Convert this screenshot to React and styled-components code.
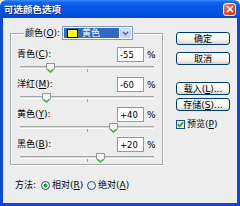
import React from 'react';
import styled, { createGlobalStyle } from 'styled-components';

const GlobalStyle = createGlobalStyle`
  html, body {
    margin: 0;
    padding: 0;
    background: #ffffff;
  }
  body {
    font-family: "DejaVu Sans", "Noto Sans CJK SC", sans-serif;
  }
`;

const FONT = `"DejaVu Sans", "Noto Sans CJK SC", sans-serif`;
const FACE = '#EDEDED';

const sliders = [
  { id: 'cyan', label: '青色', hotkey: 'C', value: -55 },
  { id: 'magenta', label: '洋红', hotkey: 'M', value: -60 },
  { id: 'yellow', label: '黄色', hotkey: 'Y', value: 40 },
  { id: 'black', label: '黑色', hotkey: 'B', value: 20 },
];

const TRACK = 134;

const formatValue = (v) => (v > 0 ? `+${v}` : `${v}`);

const Thumb = ({ left }) => (
  <ThumbWrap style={{ left }}>
    <svg width='9' height='10' viewBox='0 0 9 10'>
      <path
        d='M0.5 0.5 H8.5 V6 L4.5 9.5 L0.5 6 Z'
        fill='#F4F4F0'
        stroke='#8C97A5'
      />
      <path d='M1.5 6.3 L4.5 8.8 L7.5 6.3' fill='none' stroke='#3BB23B' strokeWidth='1.3' />
    </svg>
  </ThumbWrap>
);

const SliderRow = ({ label, hotkey, value }) => {
  const center = TRACK / 2 + (value / 100) * (TRACK / 2);
  return (
    <Row>
      <RowTop>
        <Label>
          {label}(<u>{hotkey}</u>):
        </Label>
        <Input>{formatValue(value)}</Input>
        <Percent>%</Percent>
      </RowTop>
      <TrackArea>
        <Channel />
        <Tick />
        <Thumb left={Math.round(center - 4.5)} />
      </TrackArea>
    </Row>
  );
};

const App = () => {
  return (
    <>
      <GlobalStyle />
      <Window>
        <TitleBar>
          <Title>可选颜色选项</Title>
          <CloseButton>
            <svg width='8' height='8' viewBox='0 0 8 8'>
              <path d='M1 1 L7 7 M7 1 L1 7' stroke='#fff' strokeWidth='1.6' />
            </svg>
          </CloseButton>
        </TitleBar>
        <Client>
          <Main>
            <Group>
              <Legend>
                <LegendLabel>
                  颜色(<u>O</u>):
                </LegendLabel>
                <Select>
                  <Selected>
                    <Swatch />
                    <SelectedText>黄色</SelectedText>
                  </Selected>
                  <DropArrow>
                    <svg width='7' height='5' viewBox='0 0 7 5'>
                      <path d='M0.8 0.8 L3.5 3.5 L6.2 0.8' fill='none' stroke='#4D6185' strokeWidth='1.4' />
                    </svg>
                  </DropArrow>
                </Select>
              </Legend>
              {sliders.map((s) => (
                <SliderRow key={s.id} {...s} />
              ))}
            </Group>
            <Side>
              <Button $gap={0}>确定</Button>
              <Button $gap={7}>取消</Button>
              <Button $gap={17}>
                载入(<u>L</u>)...
              </Button>
              <Button $gap={3}>
                存储(<u>S</u>)...
              </Button>
              <CheckRow>
                <CheckBox>
                  <svg width='7' height='7' viewBox='0 0 7 7'>
                    <path d='M0.8 3.4 L2.6 5.3 L6.2 1.2' fill='none' stroke='#21A121' strokeWidth='1.6' />
                  </svg>
                </CheckBox>
                <span>
                  预览(<u>P</u>)
                </span>
              </CheckRow>
            </Side>
          </Main>
          <MethodRow>
            <MethodLabel>方法:</MethodLabel>
            <RadioItem>
              <Radio $checked />
              <span>
                相对(<u>R</u>)
              </span>
            </RadioItem>
            <RadioItem>
              <Radio />
              <span>
                绝对(<u>A</u>)
              </span>
            </RadioItem>
          </MethodRow>
        </Client>
      </Window>
    </>
  );
};

const Window = styled.div`
  width: 240px;
  height: 206px;
  display: flex;
  flex-direction: column;
  font-family: ${FONT};
  font-size: 9px;
  color: #000;
`;

const TitleBar = styled.div`
  height: 18px;
  flex: none;
  display: flex;
  align-items: center;
  justify-content: space-between;
  padding: 0 4px 0 4px;
  border-radius: 6px 6px 0 0;
  background: linear-gradient(
    to bottom,
    #3D8FF5 0%,
    #1464EE 12%,
    #0758E6 40%,
    #0552DE 75%,
    #0447C9 100%
  );
`;

const Title = styled.div`
  color: #fff;
  font-weight: bold;
  font-size: 9.5px;
  letter-spacing: 0;
  font-family: "Noto Sans CJK SC", sans-serif;
  text-shadow: 1px 1px 0 #0A2A8A;
`;

const CloseButton = styled.div`
  width: 13px;
  height: 13px;
  box-sizing: border-box;
  border: 1px solid #fff;
  border-radius: 3px;
  background: linear-gradient(135deg, #F09070 0%, #E0502A 45%, #C7391A 100%);
  display: flex;
  align-items: center;
  justify-content: center;
`;

const Client = styled.div`
  flex: 1;
  background: ${FACE};
  border: 3px solid #0B47D8;
  border-top: none;
  padding: 8px 0 0 7px;
  display: flex;
  flex-direction: column;
`;

const Main = styled.div`
  display: flex;
  align-items: flex-start;
`;

const Group = styled.fieldset`
  box-sizing: border-box;
  width: 153px;
  min-width: 0;
  margin: 0;
  padding: 7px 0 1px 0;
  border: 1px solid #A8A8A8;
  box-shadow: inset 1px 1px 0 #fff, 1px 1px 0 #fff;
  display: flex;
  flex-direction: column;
  gap: 4px;
`;

const Legend = styled.legend`
  margin-left: 13px;
  padding: 0 1px;
  height: 14px;
  display: flex;
  align-items: center;
  background: ${FACE};
`;

const LegendLabel = styled.span`
  width: 37px;
  line-height: 11px;
`;

const Select = styled.div`
  width: 71px;
  height: 14px;
  box-sizing: border-box;
  border: 1px solid #7F9DB9;
  background: #fff;
  padding: 1px;
  display: flex;
`;

const Selected = styled.div`
  flex: 1;
  background: #316AC5;
  display: flex;
  align-items: center;
  padding-left: 3px;
`;

const Swatch = styled.div`
  width: 11px;
  height: 9px;
  box-sizing: border-box;
  border: 1px solid #000;
  background: #FFFF00;
`;

const SelectedText = styled.span`
  color: #fff;
  margin-left: 4px;
  line-height: 10px;
`;

const DropArrow = styled.div`
  width: 11px;
  margin-left: 1px;
  box-sizing: border-box;
  border: 1px solid #B9CDF5;
  border-radius: 2px;
  background: linear-gradient(#DCE7FE, #BCD0F8);
  display: flex;
  align-items: center;
  justify-content: center;
`;

const Row = styled.div`
  display: flex;
  flex-direction: column;
`;

const RowTop = styled.div`
  height: 15px;
  display: flex;
  align-items: center;
  padding-left: 6px;
`;

const Label = styled.span`
  flex: 1;
  line-height: 11px;
`;

const Input = styled.div`
  width: 27px;
  height: 15px;
  box-sizing: border-box;
  border: 1px solid #7F9DB9;
  background: #fff;
  padding-left: 2px;
  display: flex;
  align-items: center;
  font-family: "DejaVu Sans", sans-serif;
  font-size: 8.5px;
`;

const Percent = styled.span`
  width: 15px;
  margin-left: 3px;
`;

const TrackArea = styled.div`
  position: relative;
  height: 11px;
  width: ${TRACK}px;
  margin-left: 9px;
`;

const Channel = styled.div`
  margin-top: 4px;
  height: 3px;
  box-sizing: border-box;
  border-top: 1px solid #A6A6A6;
  border-bottom: 1px solid #FFFFFF;
  background: #D8D8D8;
`;

const Tick = styled.div`
  position: absolute;
  left: ${TRACK / 2}px;
  top: 7px;
  width: 1px;
  height: 3px;
  background: #A0A0A0;
`;

const ThumbWrap = styled.div`
  position: absolute;
  top: 1px;
  width: 9px;
  height: 10px;
  line-height: 0;
`;

const Side = styled.div`
  margin-left: 13px;
  margin-top: 6px;
  display: flex;
  flex-direction: column;
`;

const Button = styled.div`
  width: 54px;
  height: 13px;
  box-sizing: border-box;
  margin-top: ${(p) => p.$gap}px;
  border: 1px solid #003C74;
  border-radius: 3px;
  background: linear-gradient(#FFFFFF 0%, #F4F4F0 60%, #D8D5CC 100%);
  display: flex;
  align-items: center;
  justify-content: center;
  line-height: 10px;
`;

const CheckRow = styled.div`
  margin-top: 8px;
  display: flex;
  align-items: center;
  gap: 2px;
  line-height: 11px;
`;

const CheckBox = styled.div`
  width: 9px;
  height: 9px;
  box-sizing: border-box;
  border: 1px solid #1C5180;
  background: linear-gradient(135deg, #DCDCD7, #FFFFFF);
  display: flex;
  align-items: center;
  justify-content: center;
`;

const MethodRow = styled.div`
  margin-top: 14px;
  height: 13px;
  padding-left: 5px;
  display: flex;
  align-items: center;
  line-height: 11px;
`;

const MethodLabel = styled.span`
  width: 26px;
`;

const RadioItem = styled.div`
  display: flex;
  align-items: center;
  gap: 2px;
  width: 46px;
`;

const Radio = styled.div`
  width: 9px;
  height: 9px;
  box-sizing: border-box;
  border-radius: 50%;
  border: 1px solid #1C5180;
  background: ${(p) =>
    p.$checked
      ? 'radial-gradient(circle, #21A121 0 1.8px, #FFFFFF 2.2px)'
      : 'linear-gradient(135deg, #DCDCD7, #FFFFFF)'};
`;

export default App;
